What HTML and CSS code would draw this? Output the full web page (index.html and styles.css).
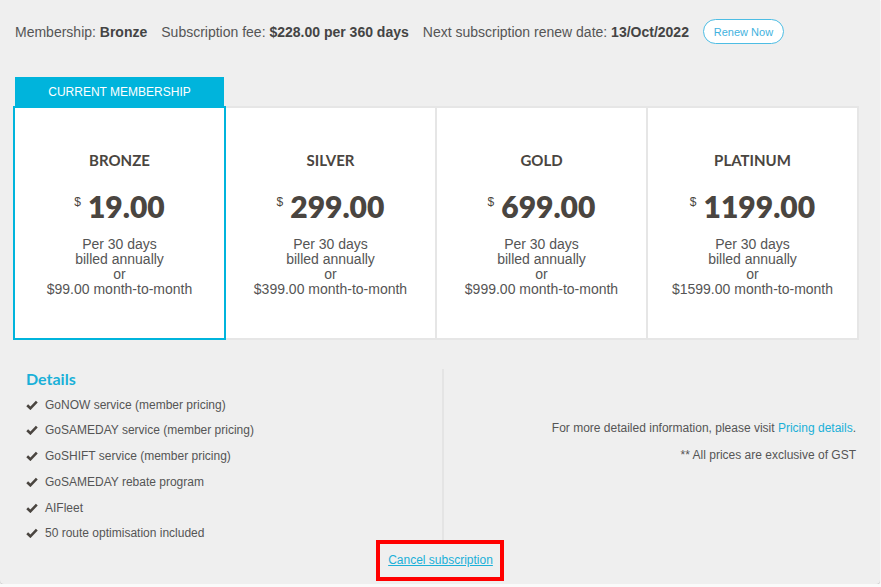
FILE: index.html
```html
<!DOCTYPE html>
<html>
<head>
<meta charset="utf-8">
<link rel="stylesheet" href="styles.css">
</head>
<body>
<div class="page">
  <div class="summary">
    <span>Membership: <b>Bronze</b></span>
    <span>Subscription fee: <b>$228.00 per 360 days</b></span>
    <span>Next subscription renew date: <b>13/Oct/2022</b></span>
    <button class="renew">Renew Now</button>
  </div>

  <div class="tab-row"><div class="tab">CURRENT MEMBERSHIP</div></div>
  <div class="plans">
    <div class="plan current">
      <div class="plan-name">BRONZE</div>
      <div class="price"><sup>$</sup>19.00</div>
      <div class="terms">Per 30 days<br>billed annually<br>or<br>$99.00 month-to-month</div>
    </div>
    <div class="plan">
      <div class="plan-name">SILVER</div>
      <div class="price"><sup>$</sup>299.00</div>
      <div class="terms">Per 30 days<br>billed annually<br>or<br>$399.00 month-to-month</div>
    </div>
    <div class="plan">
      <div class="plan-name">GOLD</div>
      <div class="price"><sup>$</sup>699.00</div>
      <div class="terms">Per 30 days<br>billed annually<br>or<br>$999.00 month-to-month</div>
    </div>
    <div class="plan">
      <div class="plan-name">PLATINUM</div>
      <div class="price"><sup>$</sup>1199.00</div>
      <div class="terms">Per 30 days<br>billed annually<br>or<br>$1599.00 month-to-month</div>
    </div>
  </div>

  <div class="bottom">
    <div class="details">
      <div class="details-title">Details</div>
      <ul class="features">
        <li><svg class="check" viewBox="0 0 12 10"><path d="M1.2 5.2 L4.4 8.3 L10.8 1.6"/></svg>GoNOW service (member pricing)</li>
        <li><svg class="check" viewBox="0 0 12 10"><path d="M1.2 5.2 L4.4 8.3 L10.8 1.6"/></svg>GoSAMEDAY service (member pricing)</li>
        <li><svg class="check" viewBox="0 0 12 10"><path d="M1.2 5.2 L4.4 8.3 L10.8 1.6"/></svg>GoSHIFT service (member pricing)</li>
        <li><svg class="check" viewBox="0 0 12 10"><path d="M1.2 5.2 L4.4 8.3 L10.8 1.6"/></svg>GoSAMEDAY rebate program</li>
        <li><svg class="check" viewBox="0 0 12 10"><path d="M1.2 5.2 L4.4 8.3 L10.8 1.6"/></svg>AIFleet</li>
        <li><svg class="check" viewBox="0 0 12 10"><path d="M1.2 5.2 L4.4 8.3 L10.8 1.6"/></svg>50 route optimisation included</li>
      </ul>
    </div>
    <div class="info">
      <p>For more detailed information, please visit <a href="#">Pricing details</a>.</p>
      <p class="gst">** All prices are exclusive of GST</p>
    </div>
  </div>

  <div class="cancel-row"><span class="cancel-box"><a href="#">Cancel subscription</a></span></div>
</div>
</body>
</html>
```

FILE: styles.css
```css
html, body {
  margin: 0;
  padding: 0;
  background: #fafafa;
}
body {
  font-family: "Liberation Sans", Arial, sans-serif;
  color: #555;
}
.page {
  width: 880px;
  height: 584px;
  box-sizing: border-box;
  background: #efefef;
  border-radius: 0 0 4px 4px;
  box-shadow: 0 1px 1px rgba(0, 0, 0, 0.22);
  overflow: hidden;
}
.summary {
  display: flex;
  align-items: center;
  gap: 14px;
  padding: 19px 0 0 15px;
  height: 25px;
  font-size: 14px;
  color: #555;
}
.summary b {
  color: #444;
}
.renew {
  width: 81px;
  height: 25px;
  padding: 0;
  border: 1px solid #4dbde4;
  border-radius: 13px;
  background: #fff;
  color: #3fb2de;
  font-family: "Liberation Sans", Arial, sans-serif;
  font-size: 11px;
}
.tab-row {
  margin-top: 33px;
  padding-left: 15px;
}
.tab {
  width: 209px;
  height: 29px;
  line-height: 30px;
  background: #00b4dc;
  color: #fff;
  font-size: 12px;
  text-align: center;
}
.plans {
  margin-left: 13px;
  width: 846px;
  box-sizing: border-box;
  display: flex;
  gap: 2px;
  padding: 2px;
  background: #e6e6e6;
}
.plan {
  flex: 1;
  background: #fff;
  text-align: center;
  padding: 43px 0 41px;
}
.plan.current {
  outline: 2px solid #00b4dc;
}
.plan-name {
  font-family: Lato, "Open Sans", sans-serif;
  font-weight: 700;
  font-size: 15px;
  line-height: 18px;
  color: #4a4540;
}
.price {
  margin-top: 20px;
  font-family: Lato, "Open Sans", sans-serif;
  font-weight: 800;
  font-size: 30px;
  line-height: 34px;
  color: #4a4540;
}
.price sup {
  font-family: "Liberation Sans", Arial, sans-serif;
  font-weight: 400;
  font-size: 12px;
  vertical-align: 12px;
  line-height: 0;
  margin-right: 7px;
}
.terms {
  margin-top: 14px;
  font-size: 14px;
  line-height: 15px;
  color: #555;
}
.bottom {
  display: flex;
  margin-top: 29px;
}
.details {
  width: 416px;
  padding-left: 26px;
  border-right: 2px solid #e4e4e4;
}
.details-title {
  font-family: Lato, "Open Sans", sans-serif;
  font-weight: 700;
  font-size: 16px;
  line-height: 20px;
  color: #1ab0d8;
}
.features {
  list-style: none;
  margin: 0;
  padding: 0;
}
.features li {
  display: flex;
  align-items: center;
  gap: 7px;
  margin-top: 9.8px;
  font-size: 12px;
  line-height: 16px;
  color: #555;
}
.features li:first-child {
  margin-top: 7.5px;
}
.check {
  width: 12px;
  height: 10px;
  fill: none;
  stroke: #4a4540;
  stroke-width: 2.6;
}
.info {
  flex: 1;
  text-align: right;
  padding: 51px 24px 0 0;
  font-size: 12px;
  line-height: 16px;
}
.info p {
  margin: 0;
}
.info .gst {
  margin-top: 11px;
}
.info a {
  color: #1ab0d8;
  text-decoration: none;
}
.cancel-row {
  text-align: center;
  margin-top: -1px;
}
.cancel-box {
  display: inline-block;
  border: 4px solid #ff0000;
  padding: 0 7px 0 8px;
  height: 33px;
  line-height: 33px;
  font-size: 12px;
}
.cancel-box a {
  color: #1ab0d8;
  text-decoration: underline;
}
```
